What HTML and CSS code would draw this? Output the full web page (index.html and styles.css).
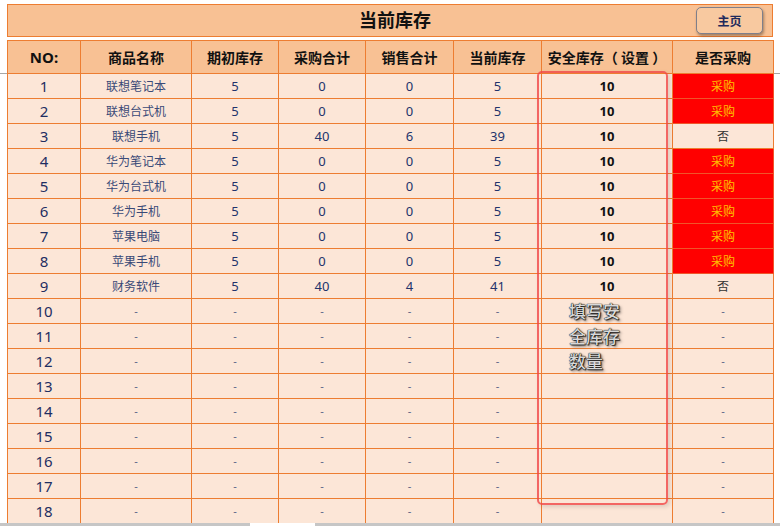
FILE: index.html
```html
<!DOCTYPE html>
<html lang="zh">
<head>
<meta charset="utf-8">
<link rel="stylesheet" href="styles.css">
</head>
<body>
<div class="sheet">
  <div class="freeze"></div>
  <div class="titlebar">
    <span></span>
    <h1 class="title">当前库存</h1>
    <button class="home">主页</button>
  </div>
  <table class="stock">
    <colgroup>
      <col class="c1"><col class="c2"><col class="c3"><col class="c4"><col class="c5"><col class="c6"><col class="c7"><col class="c8">
    </colgroup>
    <thead>
      <tr><th>NO:</th><th>商品名称</th><th>期初库存</th><th>采购合计</th><th>销售合计</th><th>当前库存</th><th>安全库存（ 设置 ）</th><th>是否采购</th></tr>
    </thead>
    <tbody>
      <tr><td class="no">1</td><td class="name">联想笔记本</td><td>5</td><td>0</td><td>0</td><td>5</td><td class="safe">10</td><td class="buy">采购</td></tr>
      <tr><td class="no">2</td><td class="name">联想台式机</td><td>5</td><td>0</td><td>0</td><td>5</td><td class="safe">10</td><td class="buy">采购</td></tr>
      <tr><td class="no">3</td><td class="name">联想手机</td><td>5</td><td>40</td><td>6</td><td>39</td><td class="safe">10</td><td class="nobuy">否</td></tr>
      <tr><td class="no">4</td><td class="name">华为笔记本</td><td>5</td><td>0</td><td>0</td><td>5</td><td class="safe">10</td><td class="buy">采购</td></tr>
      <tr><td class="no">5</td><td class="name">华为台式机</td><td>5</td><td>0</td><td>0</td><td>5</td><td class="safe">10</td><td class="buy">采购</td></tr>
      <tr><td class="no">6</td><td class="name">华为手机</td><td>5</td><td>0</td><td>0</td><td>5</td><td class="safe">10</td><td class="buy">采购</td></tr>
      <tr><td class="no">7</td><td class="name">苹果电脑</td><td>5</td><td>0</td><td>0</td><td>5</td><td class="safe">10</td><td class="buy">采购</td></tr>
      <tr><td class="no">8</td><td class="name">苹果手机</td><td>5</td><td>0</td><td>0</td><td>5</td><td class="safe">10</td><td class="buy">采购</td></tr>
      <tr><td class="no">9</td><td class="name">财务软件</td><td>5</td><td>40</td><td>4</td><td>41</td><td class="safe">10</td><td class="nobuy">否</td></tr>
      <tr><td class="no">10</td><td class="dash">-</td><td class="dash">-</td><td class="dash">-</td><td class="dash">-</td><td class="dash">-</td><td></td><td class="dash">-</td></tr>
      <tr><td class="no">11</td><td class="dash">-</td><td class="dash">-</td><td class="dash">-</td><td class="dash">-</td><td class="dash">-</td><td></td><td class="dash">-</td></tr>
      <tr><td class="no">12</td><td class="dash">-</td><td class="dash">-</td><td class="dash">-</td><td class="dash">-</td><td class="dash">-</td><td></td><td class="dash">-</td></tr>
      <tr><td class="no">13</td><td class="dash">-</td><td class="dash">-</td><td class="dash">-</td><td class="dash">-</td><td class="dash">-</td><td></td><td class="dash">-</td></tr>
      <tr><td class="no">14</td><td class="dash">-</td><td class="dash">-</td><td class="dash">-</td><td class="dash">-</td><td class="dash">-</td><td></td><td class="dash">-</td></tr>
      <tr><td class="no">15</td><td class="dash">-</td><td class="dash">-</td><td class="dash">-</td><td class="dash">-</td><td class="dash">-</td><td></td><td class="dash">-</td></tr>
      <tr><td class="no">16</td><td class="dash">-</td><td class="dash">-</td><td class="dash">-</td><td class="dash">-</td><td class="dash">-</td><td></td><td class="dash">-</td></tr>
      <tr><td class="no">17</td><td class="dash">-</td><td class="dash">-</td><td class="dash">-</td><td class="dash">-</td><td class="dash">-</td><td></td><td class="dash">-</td></tr>
      <tr><td class="no">18</td><td class="dash">-</td><td class="dash">-</td><td class="dash">-</td><td class="dash">-</td><td class="dash">-</td><td></td><td class="dash">-</td></tr>
    </tbody>
  </table>
  <div class="callout"></div>
  <div class="note">填写安<br>全库存<br>数量</div>
  <div class="tabs"><span class="tab-active"></span></div>
</div>
</body>
</html>
```
FILE: styles.css
```css
html, body {
  margin: 0;
  padding: 0;
  background: #ffffff;
  overflow: hidden;
}
body {
  font-family: "Noto Sans", "Noto Sans CJK SC", sans-serif;
  width: 780px;
  height: 526px;
}
.sheet {
  position: relative;
  width: 780px;
  height: 526px;
  padding: 4px 0 0 7px;
  box-sizing: border-box;
}
.freeze {
  position: absolute;
  left: 0;
  right: 0;
  top: 73px;
  height: 1px;
  background: #a6a6a6;
}
.titlebar {
  position: relative;
  width: 766px;
  height: 33px;
  box-sizing: border-box;
  border: 1px solid #ed7d31;
  background: #f8c194;
  display: grid;
  grid-template-columns: 1fr auto 1fr;
  align-items: center;
}
.title {
  margin: 0 0 4px 0;
  font-family: "Noto Sans CJK SC", sans-serif;
  font-size: 18px;
  font-weight: 700;
  color: #111;
  line-height: 1;
  transform: translateX(5px);
}
.home {
  justify-self: end;
  margin-right: 9px;
  width: 67px;
  height: 27px;
  border: 1.5px solid #7f7f8a;
  border-radius: 5px;
  background: #f8c9a0;
  box-shadow: 1px 2px 3px rgba(0,0,0,0.35);
  font-family: "Noto Sans CJK SC", sans-serif;
  font-size: 12px;
  font-weight: 700;
  color: #1f2a5c;
  padding: 0;
}
.stock {
  position: relative;
  margin-top: 3px;
  border-collapse: collapse;
  table-layout: fixed;
  width: 766px;
  background: #fce6d7;
}
.c1 { width: 73px; }
.c2 { width: 111px; }
.c3 { width: 87px; }
.c4 { width: 87px; }
.c5 { width: 88px; }
.c6 { width: 88px; }
.c7 { width: 131px; }
.c8 { width: 101px; }
.stock th, .stock td {
  border: 1px solid #ed7d31;
  text-align: center;
  padding: 0;
  white-space: nowrap;
  overflow: hidden;
}
.stock th {
  height: 32px;
  background: #f8c194;
  font-family: "Noto Sans CJK SC", sans-serif;
  font-size: 14px;
  font-weight: 700;
  color: #111;
}
.stock th:first-child {
  font-family: "Noto Sans", sans-serif;
  font-size: 15px;
}
.stock td {
  height: 25px;
  font-size: 13px;
  color: #22336b;
  font-family: "Noto Sans", "Noto Sans CJK SC", sans-serif;
  padding-bottom: 1px;
  box-sizing: border-box;
}
.stock td.no {
  font-size: 15px;
  color: #1f2e62;
}
.stock td.name {
  font-family: "Noto Sans CJK SC", sans-serif;
  font-size: 12px;
  color: #3a4a78;
}
.stock td.safe {
  font-weight: 700;
  color: #111;
}
.stock td.buy {
  background: #ff0000;
  color: #ffc000;
  font-family: "Noto Sans CJK SC", sans-serif;
  font-size: 12px;
  border-color: #f0552a;
}
.stock td.nobuy {
  font-family: "Noto Sans CJK SC", sans-serif;
  font-size: 12px;
  color: #333;
}
.stock td.dash {
  color: #5a6488;
  font-size: 11px;
}
.stock td:nth-child(8) {
  border-left-color: #f2a56c;
}
.callout {
  position: absolute;
  left: 537px;
  top: 71px;
  width: 131px;
  height: 434px;
  box-sizing: border-box;
  border: 2px solid rgba(240, 70, 70, 0.8);
  border-radius: 5px;
  box-shadow: 2px 2px 4px rgba(0,0,0,0.12);
}
.note {
  position: absolute;
  left: 569px;
  top: 298px;
  font-family: "Noto Sans CJK SC", sans-serif;
  font-size: 17px;
  font-weight: 500;
  line-height: 25px;
  color: #d8d8d8;
  text-shadow: 0 0 1px #000, 0 0 1px #000, 1px 1px 1px #333, 2px 2px 3px rgba(0,0,0,0.5);
}
.tabs {
  position: absolute;
  left: 0;
  right: 0;
  bottom: 0;
  height: 3px;
  background: #c6c6c6;
}
.tab-active {
  position: absolute;
  left: 250px;
  width: 65px;
  top: 0;
  bottom: 0;
  background: #ffffff;
}
```
